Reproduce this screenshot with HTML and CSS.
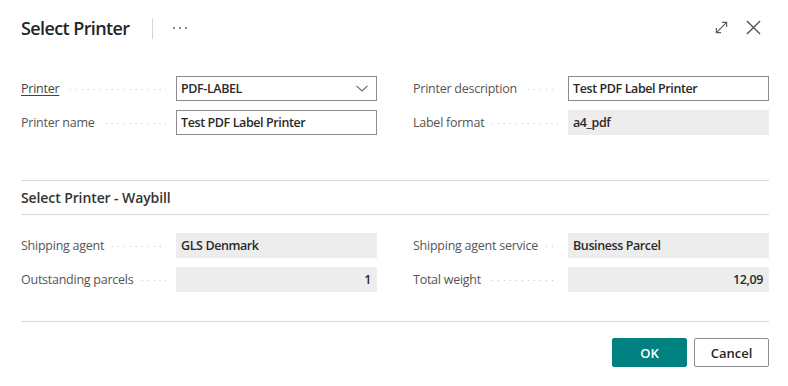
FILE: index.html
```html
<!DOCTYPE html>
<html lang="en">
<head>
<meta charset="utf-8">
<title>Select Printer</title>
<link rel="stylesheet" href="styles.css">
</head>
<body>
<div class="dialog">
  <header class="header">
    <h1 class="title">Select Printer</h1>
    <span class="vsep"></span>
    <svg class="more" width="16" height="4" viewBox="0 0 16 4" aria-hidden="true">
      <circle cx="2" cy="2" r="0.9" fill="#555"/><circle cx="8" cy="2" r="0.9" fill="#555"/><circle cx="14" cy="2" r="0.9" fill="#555"/>
    </svg>
    <span class="spacer"></span>
    <svg class="icon expand" width="16" height="16" viewBox="0 0 16 16" aria-hidden="true">
      <path d="M2.5 13.5 L13.5 2.5 M8.5 2.5 H13.5 V7.5 M2.5 8.5 V13.5 H7.5" fill="none" stroke="#5a5a5a" stroke-width="1.2"/>
    </svg>
    <svg class="icon close" width="16" height="16" viewBox="0 0 16 16" aria-hidden="true">
      <path d="M1 1 L15 15 M15 1 L1 15" fill="none" stroke="#505050" stroke-width="1.4"/>
    </svg>
  </header>

  <section class="grid top">
    <div class="field">
      <span class="label link">Printer</span><span class="leader"></span>
      <div class="box input select"><span>PDF-LABEL</span>
        <svg class="chev" width="12" height="7" viewBox="0 0 12 7" aria-hidden="true"><path d="M0.5 0.8 L6 6 L11.5 0.8" fill="none" stroke="#6a6a6a" stroke-width="1.1"/></svg>
      </div>
    </div>
    <div class="field">
      <span class="label">Printer description</span><span class="leader"></span>
      <div class="box input"><span>Test PDF Label Printer</span></div>
    </div>
    <div class="field">
      <span class="label">Printer name</span><span class="leader"></span>
      <div class="box input"><span>Test PDF Label Printer</span></div>
    </div>
    <div class="field">
      <span class="label">Label format</span><span class="leader"></span>
      <div class="box ro"><span>a4_pdf</span></div>
    </div>
  </section>

  <div class="section-head">Select Printer - Waybill</div>

  <section class="grid bottom">
    <div class="field">
      <span class="label">Shipping agent</span><span class="leader"></span>
      <div class="box ro"><span>GLS Denmark</span></div>
    </div>
    <div class="field">
      <span class="label">Shipping agent service</span><span class="leader"></span>
      <div class="box ro"><span>Business Parcel</span></div>
    </div>
    <div class="field">
      <span class="label">Outstanding parcels</span><span class="leader"></span>
      <div class="box ro num"><span>1</span></div>
    </div>
    <div class="field">
      <span class="label">Total weight</span><span class="leader"></span>
      <div class="box ro num"><span>12,09</span></div>
    </div>
  </section>

  <footer class="footer">
    <button class="btn ok">OK</button>
    <button class="btn cancel">Cancel</button>
  </footer>
</div>
</body>
</html>
```

FILE: styles.css
```css
* { box-sizing: border-box; }
html, body { margin: 0; padding: 0; background: #fff; }
body {
  font-family: "Open Sans", "Noto Sans", "Liberation Sans", sans-serif;
  color: #212121;
  width: 788px;
  height: 386px;
  overflow: hidden;
}
.dialog { padding: 14px 19px 0 21px; }

.header { display: flex; align-items: center; height: 28px; }
.title { margin: 0; font-size: 18px; font-weight: 600; color: #252525; letter-spacing: -0.6px; }
.vsep { width: 1px; height: 21px; background: #d6d6d6; margin-left: 22px; }
.more { display: block; margin-left: 19px; margin-top: 0px; }
.spacer { flex: 1; }
.icon { display: block; }
.expand { margin-right: 17px; width: 15px; height: 15px; margin-top: -2px; }
.close { margin-right: 8px; width: 15px; height: 15px; margin-top: -2px; }

.grid {
  display: grid;
  grid-template-columns: 356px 356px;
  column-gap: 36px;
  row-gap: 9px;
}
.top { margin-top: 34px; }
.field { display: flex; align-items: center; height: 25px; }
.label { font-size: 12.5px; color: #555; white-space: nowrap; letter-spacing: -0.25px; }
.label.link { text-decoration: underline; text-underline-offset: 2px; color: #444; }
.leader {
  flex: 1;
  height: 1px;
  margin: 2px 10px 0 7px;
  background-image: linear-gradient(to right, #c4c4c4 1px, transparent 1px);
  background-size: 6px 1px;
  background-repeat: repeat-x;
  background-position: right center;
}
.box {
  width: 201px;
  height: 25px;
  flex: none;
  display: flex;
  align-items: center;
  padding: 0 6px 0 4px;
  font-size: 12.5px;
  font-weight: 600;
  letter-spacing: -0.4px;
  color: #2a2a2a;
}
.input { border: 1px solid #8c8c8c; background: #fff; }
.select { justify-content: space-between; padding-right: 8px; }
.chev { display: block; }
.ro { background: #ededed; padding-left: 5px; }
.num { justify-content: flex-end; padding-right: 6px; }

.section-head {
  margin-top: 45px;
  border-top: 1px solid #d9d9d9;
  border-bottom: 1px solid #d9d9d9;
  height: 35px;
  display: flex;
  align-items: center;
  font-size: 14px;
  font-weight: 600;
  color: #333;
  letter-spacing: -0.1px;
}
.bottom { margin-top: 18px; }

.footer {
  margin-top: 29px;
  border-top: 1px solid #d9d9d9;
  padding-top: 16px;
  display: flex;
  justify-content: flex-end;
  gap: 7px;
}
.btn {
  width: 75px;
  height: 29px;
  border-radius: 2px;
  font-family: inherit;
  font-size: 13px;
  font-weight: 600;
  cursor: pointer;
}
.ok { background: #008080; border: 1px solid #008080; color: #fff; }
.cancel { background: #fff; border: 1px solid #8c8c8c; color: #262626; }
```
